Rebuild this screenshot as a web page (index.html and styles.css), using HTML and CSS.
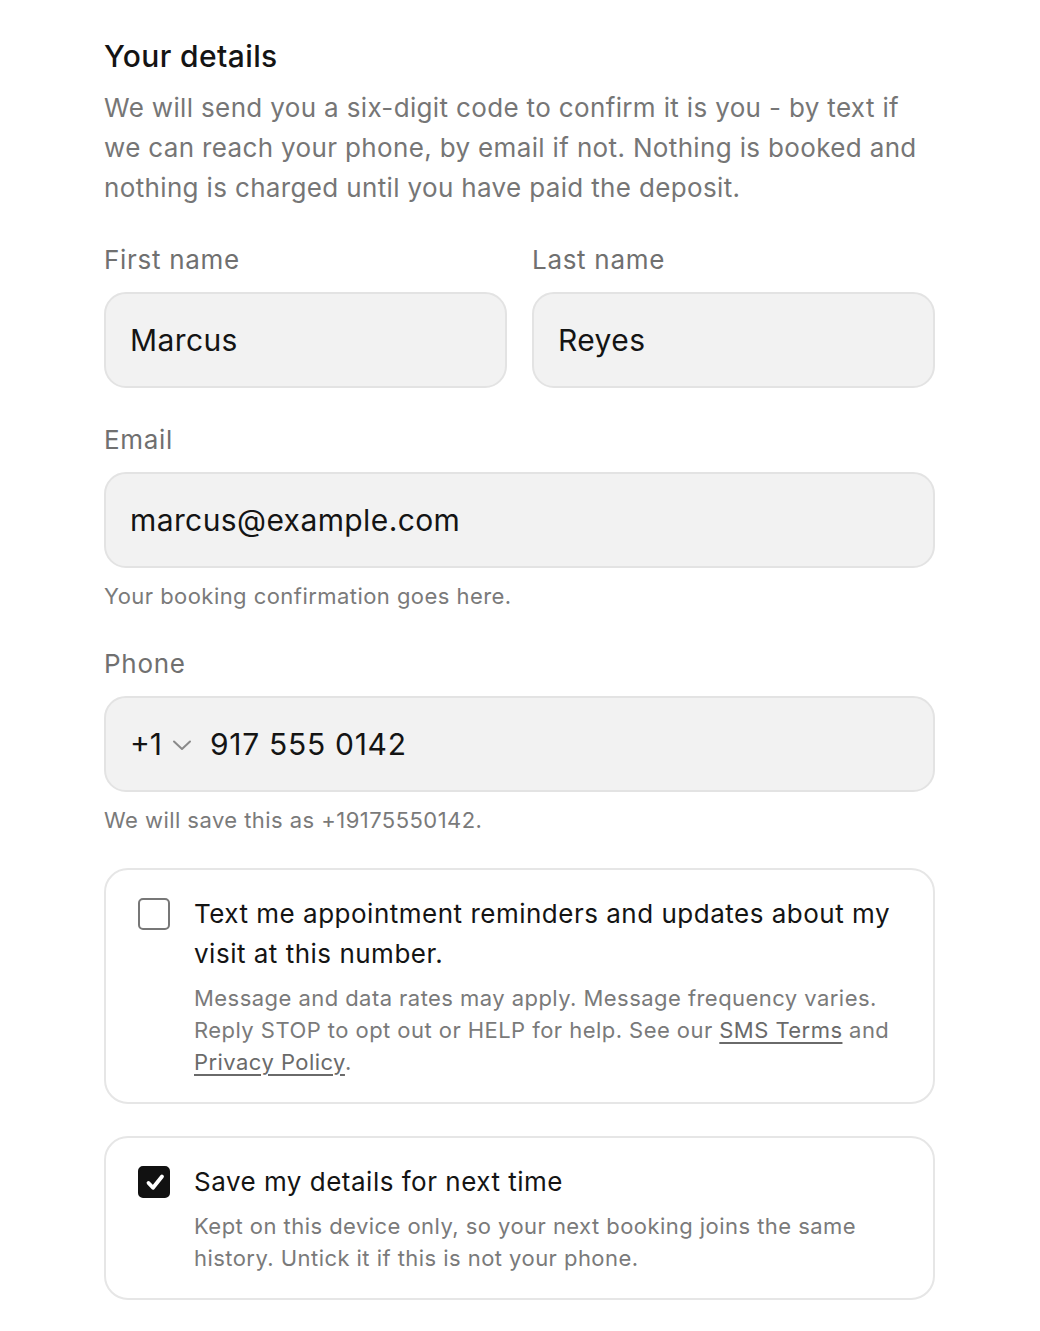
FILE: index.html
```html
<!DOCTYPE html>
<html lang="en">
<head>
    <meta charset="UTF-8">
    <meta name="viewport" content="width=device-width, initial-scale=1.0">
    <title>Your details</title>
    <link rel="stylesheet" href="styles.css">
</head>
<body>
    <form class="details">
        <h2 class="title">Your details</h2>
        <p class="intro">We will send you a six-digit code to confirm it is you - by text if we can reach your phone, by email if not. Nothing is booked and nothing is charged until you have paid the deposit.</p>

        <div class="row">
            <div class="field">
                <label class="label" for="first">First name</label>
                <input class="input" id="first" type="text" value="Marcus">
            </div>
            <div class="field">
                <label class="label" for="last">Last name</label>
                <input class="input" id="last" type="text" value="Reyes">
            </div>
        </div>

        <div class="field">
            <label class="label" for="email">Email</label>
            <input class="input" id="email" type="email" value="marcus@example.com">
            <p class="hint">Your booking confirmation goes here.</p>
        </div>

        <div class="field">
            <label class="label" for="phone">Phone</label>
            <div class="input phone">
                <span class="code">+1
                    <svg class="chevron" viewBox="0 0 20 11" width="20" height="11"><path d="M2 1.5l8 7.5 8-7.5" fill="none" stroke="#8a8a8a" stroke-width="2" stroke-linecap="round" stroke-linejoin="round"/></svg>
                </span>
                <input class="phone-num" id="phone" type="tel" value="917 555 0142">
            </div>
            <p class="hint">We will save this as +19175550142.</p>
        </div>

        <div class="cards">
            <label class="card">
                <span class="box"></span>
                <span class="card-body">
                    <span class="card-title">Text me appointment reminders and updates about my visit at this number.</span>
                    <span class="card-sub">Message and data rates may apply. Message frequency varies. Reply STOP to opt out or HELP for help. See our <a href="#">SMS Terms</a> and <a href="#">Privacy Policy</a>.</span>
                </span>
            </label>

            <label class="card">
                <span class="box checked">
                    <svg viewBox="0 0 32 32" width="32" height="32"><path d="M10.5 17l4.5 4.8 9-11.3" fill="none" stroke="#fff" stroke-width="3.8" stroke-linecap="round" stroke-linejoin="round"/></svg>
                </span>
                <span class="card-body">
                    <span class="card-title">Save my details for next time</span>
                    <span class="card-sub">Kept on this device only, so your next booking joins the same history. Untick it if this is not your phone.</span>
                </span>
            </label>
        </div>
    </form>
</body>
</html>
```

FILE: styles.css
```css
body {
    margin: 0;
    padding: 0;
    background-color: #ffffff;
    font-family: Inter, 'Noto Sans', sans-serif;
    color: #141414;
}
.details {
    width: 831px;
    margin-left: 104px;
    padding-top: 36px;
    display: flex;
    flex-direction: column;
}
.title {
    margin: 0;
    font-size: 30px;
    line-height: 40px;
    font-weight: 500;
    color: #141414;
    letter-spacing: 0.4px;
}
.intro {
    margin: 12px 0 0;
    font-size: 26px;
    line-height: 40px;
    color: #767676;
    letter-spacing: 0.35px;
}
.row {
    display: flex;
    gap: 25px;
    margin-top: 36px;
}
.row .field {
    flex: 1;
    margin-top: 0;
}
.field {
    display: flex;
    flex-direction: column;
    margin-top: 36px;
}
.label {
    font-size: 26px;
    line-height: 32px;
    color: #707070;
    margin-bottom: 16px;
    letter-spacing: 0.7px;
}
.input {
    box-sizing: border-box;
    height: 96px;
    width: 100%;
    padding: 0 24px;
    border: 2px solid #e3e3e3;
    border-radius: 22px;
    background-color: #f2f2f2;
    font-family: inherit;
    font-size: 30px;
    color: #141414;
    letter-spacing: 0.4px;
    outline: none;
}
.phone {
    display: flex;
    align-items: center;
}
.code {
    display: flex;
    align-items: center;
    gap: 10px;
    font-size: 30px;
    letter-spacing: 0;
    margin-right: 18px;
}
.chevron {
    margin-top: 3px;
}
.phone-num {
    flex: 1;
    border: none;
    background: transparent;
    font-family: inherit;
    font-size: 30px;
    color: #141414;
    letter-spacing: 0.7px;
    padding: 0;
    outline: none;
}
.hint {
    margin: 12px 0 0;
    font-size: 22px;
    line-height: 32px;
    color: #7a7a7a;
    letter-spacing: 0.45px;
}
.cards {
    display: flex;
    flex-direction: column;
    gap: 32px;
    margin-top: 32px;
}
.card {
    display: flex;
    gap: 24px;
    padding: 24px 32px;
    border: 2px solid #e6e6e6;
    border-radius: 24px;
    cursor: pointer;
}
.box {
    box-sizing: border-box;
    flex: none;
    width: 32px;
    height: 32px;
    margin-top: 4px;
    border: 2px solid #777777;
    border-radius: 5px;
    background-color: #ffffff;
}
.box.checked {
    border-color: #111111;
    background-color: #111111;
}
.box.checked svg {
    display: block;
    margin: -2px;
}
.card-body {
    display: flex;
    flex-direction: column;
    gap: 8px;
}
.card-title {
    font-size: 26px;
    line-height: 40px;
    color: #141414;
    letter-spacing: 0.5px;
}
.card-sub {
    font-size: 22px;
    line-height: 32px;
    color: #7a7a7a;
    letter-spacing: 0.45px;
}
.card-sub a {
    color: #6a6a6a;
    text-decoration: underline;
    text-underline-offset: 4px;
}
```
